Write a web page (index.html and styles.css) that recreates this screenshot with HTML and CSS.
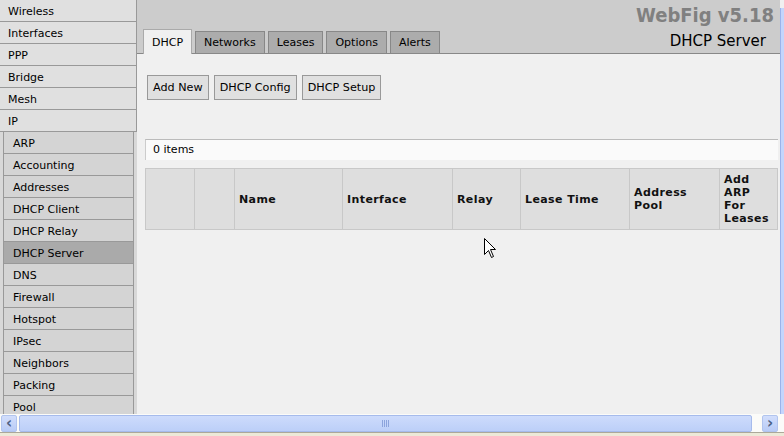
FILE: index.html
```html
<!DOCTYPE html>
<html lang="en">
<head>
  <meta charset="UTF-8" />
  <title>WebFig - DHCP Server</title>
  <link rel="stylesheet" href="styles.css">
</head>
<body>
  <div class="screen">
    <div class="viewport">
      <nav class="menu">
        <a class="menu-item">Wireless</a>
        <a class="menu-item">Interfaces</a>
        <a class="menu-item">PPP</a>
        <a class="menu-item">Bridge</a>
        <a class="menu-item">Mesh</a>
        <a class="menu-item">IP</a>
        <div class="submenu">
          <a class="sub-item">ARP</a>
          <a class="sub-item">Accounting</a>
          <a class="sub-item">Addresses</a>
          <a class="sub-item">DHCP Client</a>
          <a class="sub-item">DHCP Relay</a>
          <a class="sub-item active">DHCP Server</a>
          <a class="sub-item">DNS</a>
          <a class="sub-item">Firewall</a>
          <a class="sub-item">Hotspot</a>
          <a class="sub-item">IPsec</a>
          <a class="sub-item">Neighbors</a>
          <a class="sub-item">Packing</a>
          <a class="sub-item">Pool</a>
        </div>
      </nav>

      <main class="page">
        <header class="topbar">
          <div class="brand">WebFig v5.18</div>
          <div class="tabrow">
            <ul class="tabs">
              <li class="tab active">DHCP</li>
              <li class="tab">Networks</li>
              <li class="tab">Leases</li>
              <li class="tab">Options</li>
              <li class="tab">Alerts</li>
            </ul>
            <h1 class="title">DHCP Server</h1>
          </div>
        </header>

        <section class="content">
          <div class="toolbar">
            <button class="btn">Add New</button>
            <button class="btn">DHCP Config</button>
            <button class="btn">DHCP Setup</button>
          </div>

          <div class="count">0 items</div>

          <table class="grid">
            <colgroup>
              <col style="width:49px">
              <col style="width:40px">
              <col style="width:108px">
              <col style="width:110px">
              <col style="width:68px">
              <col style="width:109px">
              <col style="width:90px">
              <col style="width:58px">
            </colgroup>
            <thead>
              <tr>
                <th></th>
                <th></th>
                <th>Name</th>
                <th>Interface</th>
                <th>Relay</th>
                <th>Lease Time</th>
                <th>Address Pool</th>
                <th>Add ARP For Leases</th>
              </tr>
            </thead>
          </table>
        </section>

        <svg class="cursor" width="13" height="21" viewBox="0 0 13 21">
          <path d="M0.5 0.5 L0.5 16.5 L4.5 12.5 L7.5 19.5 L9.5 18.5 L6.5 11.5 L11.5 11.5 Z" fill="#fff" stroke="#000" stroke-width="1"/>
        </svg>
      </main>

      <div class="vscroll"></div>
    </div>

    <div class="hscroll">
      <span class="arrow left">&lsaquo;</span>
      <div class="thumb"><span class="grip"></span></div>
      <span class="arrow right">&rsaquo;</span>
    </div>
    <div class="statusline"></div>
  </div>
</body>
</html>
```

FILE: styles.css
```css
* {
  box-sizing: border-box;
}

body {
  margin: 0;
  font-family: "DejaVu Sans", Verdana, sans-serif;
  font-size: 11px;
  color: #000;
  background: #f0f0f0;
}

.screen {
  width: 784px;
  height: 436px;
  overflow: hidden;
}

.viewport {
  display: flex;
  height: 414px;
  overflow: hidden;
}

/* left menu */
.menu {
  width: 137px;
  flex-shrink: 0;
  background: #d8d8d8;
}

.menu-item {
  display: block;
  height: 22px;
  line-height: 21px;
  padding: 1px 0 0 8px;
  background: #e0e0e0;
  border-bottom: 1px solid #999;
  border-right: 1px solid #999;
}

.submenu {
  padding: 0 3px;
}

.sub-item {
  display: block;
  height: 22px;
  line-height: 21px;
  padding: 1px 0 0 9px;
  background: #d4d4d4;
  border-left: 1px solid #999;
  border-right: 1px solid #999;
  border-bottom: 1px solid #999;
}

.sub-item.active {
  background: #aaaaaa;
}

/* main page */
.page {
  position: relative;
  width: 643px;
  flex-shrink: 0;
  background: #f0f0f0;
}

.topbar {
  display: flex;
  flex-direction: column;
  height: 54px;
  background: #cccccc;
  border-bottom: 1px solid #888;
}

.brand {
  padding: 4px 6px 0 0;
  text-align: right;
  font-family: "DejaVu Sans Condensed", "DejaVu Sans", sans-serif;
  font-weight: bold;
  font-size: 20px;
  line-height: 23px;
  color: #808080;
}

.tabrow {
  display: flex;
  justify-content: space-between;
  align-items: flex-end;
  margin-top: auto;
  padding: 0 14px 0 6px;
}

.tabs {
  display: flex;
  align-items: flex-end;
  gap: 3px;
  margin: 0;
  padding: 0;
  list-style: none;
}

.tab {
  height: 22px;
  line-height: 21px;
  padding: 0 8px;
  background: #acacac;
  border: 1px solid #888;
  border-bottom: none;
}

.tab.active {
  height: 25px;
  line-height: 25px;
  margin-bottom: -1px;
  background: #f0f0f0;
  border-color: #aaa;
}

.title {
  margin: 0;
  font-size: 15px;
  font-weight: normal;
  line-height: 24px;
  padding-top: 2px;
}

.content {
  padding: 21px 2px 0 8px;
}

.toolbar {
  display: flex;
  gap: 5px;
  padding-left: 2px;
}

.btn {
  height: 25px;
  padding: 0 5px;
  font-family: inherit;
  font-size: 11.2px;
  color: #000;
  background: #e0e0e0;
  border: 1px solid #999;
  border-radius: 0;
}

.count {
  margin-top: 39px;
  height: 21px;
  line-height: 20px;
  padding-left: 7px;
  background: #fafafa;
  border-top: 1px solid #bbb;
  border-left: 1px solid #ccc;
}

.grid {
  margin-top: 8px;
  width: 632px;
  table-layout: fixed;
  border-collapse: collapse;
  border: 1px solid #ccc;
}

.grid th {
  height: 61px;
  padding: 4px 5px 4px 4px;
  background: #dedede;
  border: 1px solid #c8c8c8;
  text-align: left;
  vertical-align: middle;
  font-size: 11px;
  line-height: 13px;
  letter-spacing: 0.4px;
  color: #111;
}

.cursor {
  position: absolute;
  left: 347px;
  top: 238px;
}

.vscroll {
  width: 4px;
  margin-top: 8px;
  background: #c4d5fc;
  border-left: 1px solid #9cb3ea;
}

/* fake XP scrollbar */
.hscroll {
  display: flex;
  align-items: center;
  gap: 2px;
  height: 18px;
  padding: 0 6px 0 1px;
  background: #fbfbf9;
}

.arrow {
  width: 16px;
  height: 17px;
  line-height: 15px;
  text-align: center;
  font-weight: bold;
  font-size: 15px;
  color: #4d6185;
  background: linear-gradient(#d2defc, #b8cbf6);
  border: 1px solid #b1c4ee;
  border-radius: 2px;
}

.arrow.right {
  margin-left: 8px;
}

.thumb {
  display: flex;
  justify-content: center;
  align-items: center;
  flex: 1;
  height: 17px;
  background: linear-gradient(#cddbfc, #bccff8);
  border: 1px solid #a6bbec;
  border-radius: 2px;
}

.grip {
  width: 8px;
  height: 7px;
  background: repeating-linear-gradient(90deg, #8ca4dc 0 1px, transparent 1px 2px);
}

.statusline {
  height: 4px;
  background: #ece9d8;
  border-top: 1px solid #aca899;
}
```
